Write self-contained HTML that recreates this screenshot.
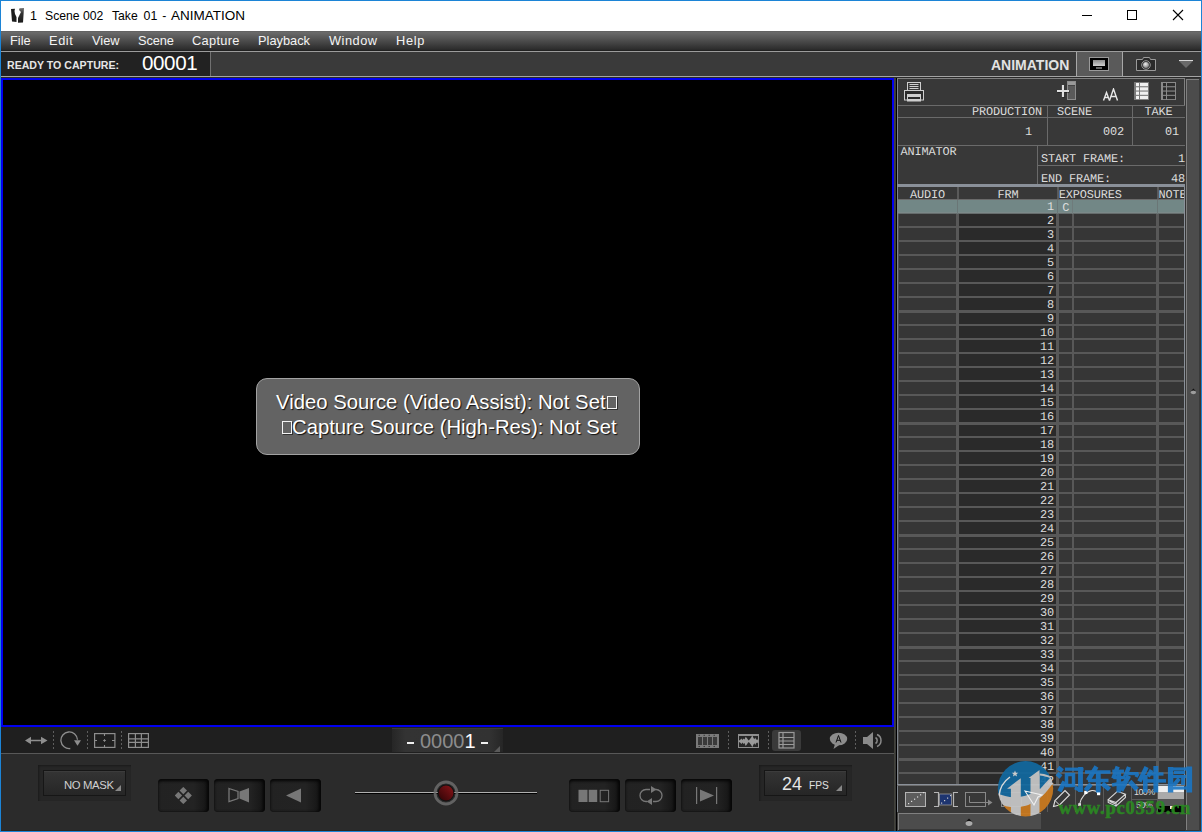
<!DOCTYPE html>
<html><head><meta charset="utf-8">
<style>
*{margin:0;padding:0;box-sizing:border-box}
html,body{width:1202px;height:832px;overflow:hidden;background:#2b2b2b}
body{position:relative;font-family:"Liberation Sans",sans-serif}
.a{position:absolute}
.m{font-family:"Liberation Mono",monospace;text-rendering:geometricPrecision}
.t{white-space:pre;line-height:1}
.msg{text-shadow:1px 1px 1px rgba(0,0,0,.85)}
</style></head><body>
<div class="a" style="left:0px;top:0px;width:1202px;height:832px;background:#1c84d6;"></div>
<div class="a" style="left:1px;top:1px;width:1200px;height:30px;background:#fff;"></div>
<svg class="a" style="left:10px;top:7px;" width="16" height="18" viewBox="0 0 16 18"><defs><linearGradient id="ig" x1="0" y1="0" x2="0" y2="1"><stop offset="0" stop-color="#777"/><stop offset=".35" stop-color="#333"/><stop offset="1" stop-color="#1a1a1a"/></linearGradient></defs><path d="M1 2L5 1.8L4.5 4L5 7L6.5 10L6.5 15L2 14.5Z" fill="#1c1c1c"/><path d="M9.5 1.2L14 1L13 15.5L8 15.7L8 11L9.5 8L11 5L9 3Z" fill="url(#ig)"/></svg>
<div class="a t " style="left:30px;top:10px;font-size:12.5px;color:#000;">1</div>
<div class="a t " style="left:45px;top:10px;font-size:12.2px;color:#000;">Scene 002</div>
<div class="a t " style="left:112px;top:10px;font-size:12.2px;color:#000;">Take</div>
<div class="a t " style="left:143.5px;top:10px;font-size:12.4px;color:#000;">01</div>
<div class="a t " style="left:162.2px;top:10px;font-size:12.2px;color:#000;">-</div>
<div class="a t " style="left:171px;top:9px;font-size:13.5px;color:#000;">ANIMATION</div>
<div class="a" style="left:1082px;top:15px;width:10px;height:1px;background:#000;"></div>
<div class="a" style="left:1127px;top:10px;width:10px;height:10px;background:transparent;border:1px solid #000"></div>
<svg class="a" style="left:1172px;top:9px;" width="12" height="12" viewBox="0 0 12 12"><path d="M1 1L11 11M11 1L1 11" stroke="#000" stroke-width="1.1"/></svg>
<div class="a" style="left:1px;top:31px;width:1200px;height:20px;background:linear-gradient(#606060,#6a6a6a 8%,#2c2c2c 92%,#1c1c1c);"></div>
<div class="a t " style="left:10px;top:35px;font-size:12.8px;color:#f4f4f4;letter-spacing:0px">File</div>
<div class="a t " style="left:49px;top:35px;font-size:12.8px;color:#f4f4f4;letter-spacing:0.6px">Edit</div>
<div class="a t " style="left:92px;top:35px;font-size:12.8px;color:#f4f4f4;letter-spacing:0px">View</div>
<div class="a t " style="left:138px;top:35px;font-size:12.8px;color:#f4f4f4;letter-spacing:-0.1px">Scene</div>
<div class="a t " style="left:192px;top:35px;font-size:12.8px;color:#f4f4f4;letter-spacing:0.3px">Capture</div>
<div class="a t " style="left:258px;top:35px;font-size:12.8px;color:#f4f4f4;letter-spacing:0px">Playback</div>
<div class="a t " style="left:329px;top:35px;font-size:12.8px;color:#f4f4f4;letter-spacing:0.5px">Window</div>
<div class="a t " style="left:396px;top:35px;font-size:12.8px;color:#f4f4f4;letter-spacing:0.7px">Help</div>
<div class="a" style="left:1px;top:51px;width:1200px;height:1px;background:#9c9c9c;"></div>
<div class="a" style="left:1px;top:52px;width:209px;height:24px;background:#222;"></div>
<div class="a" style="left:210px;top:52px;width:1px;height:24px;background:#707070;"></div>
<div class="a" style="left:211px;top:52px;width:865px;height:24px;background:#3a3a3a;"></div>
<div class="a" style="left:1076px;top:52px;width:1px;height:24px;background:#a8a8a8;"></div>
<div class="a" style="left:1077px;top:52px;width:45px;height:24px;background:#5a5a5a;"></div>
<div class="a" style="left:1122px;top:52px;width:1px;height:24px;background:#a8a8a8;"></div>
<div class="a" style="left:1123px;top:52px;width:78px;height:24px;background:#3a3a3a;"></div>
<div class="a" style="left:1px;top:76px;width:1200px;height:1px;background:#a4a4a4;"></div>
<div class="a" style="left:1px;top:77px;width:1200px;height:1px;background:#2a2a2a;"></div>
<div class="a t " style="left:7px;top:59.5px;font-size:10.6px;color:#e6e6e6;font-weight:bold">READY TO CAPTURE:</div>
<div class="a t " style="left:142px;top:53px;font-size:20.6px;color:#fff;letter-spacing:-0.4px">00001</div>
<div class="a t " style="left:991px;top:58px;font-size:14px;color:#e2e2e2;font-weight:bold">ANIMATION</div>
<svg class="a" style="left:1089px;top:57px;" width="20" height="14" viewBox="0 0 20 14"><rect x="0.5" y="0.5" width="19" height="13" fill="#000" stroke="#9a9a9a"/><defs><linearGradient id="mg" x1="0" y1="0" x2="0" y2="1"><stop offset="0" stop-color="#8a8a8a"/><stop offset="1" stop-color="#d0d0d0"/></linearGradient></defs><rect x="4" y="3" width="12" height="6" fill="url(#mg)"/><rect x="7" y="10.5" width="6" height="1" fill="#ccc"/></svg>
<svg class="a" style="left:1135px;top:56px;" width="22" height="16" viewBox="0 0 22 16"><path d="M1.5 3.5H7.5L8.5 1.5H14.5L15.5 3.5H20.5V14.5H1.5Z" fill="#2a2a2a" stroke="#9a9a9a"/><circle cx="11" cy="9" r="4.3" fill="#2a2a2a" stroke="#999"/><defs><radialGradient id="lg" cx=".4" cy=".35" r=".7"><stop offset="0" stop-color="#f0f0f0"/><stop offset="1" stop-color="#777"/></radialGradient></defs><circle cx="11" cy="9" r="3" fill="url(#lg)"/></svg>
<div class="a" style="left:1179px;top:60px;width:14px;height:1px;background:#d8d8d8;"></div>
<svg class="a" style="left:1179px;top:61px;" width="14" height="8" viewBox="0 0 14 8"><path d="M0 0H14L7 7Z" fill="#6a6a6a"/></svg>
<div class="a" style="left:1px;top:78px;width:893px;height:649px;background:#000;border:2px solid #0000f0"></div>
<div class="a" style="left:256px;top:378px;width:384px;height:77px;background:#636363;border:1px solid #a2a2a2;border-radius:11px"></div>
<div class="a t msg" style="left:276px;top:392px;font-size:20.3px;color:#fff;">Video Source (Video Assist): Not Set</div>
<div class="a" style="left:607px;top:396px;width:10px;height:13px;background:transparent;border:1px solid #f4f4f4;box-shadow:1px 1px 0 rgba(0,0,0,.5)"></div>
<div class="a" style="left:282px;top:421px;width:10px;height:13px;background:transparent;border:1px solid #f4f4f4;box-shadow:1px 1px 0 rgba(0,0,0,.5)"></div>
<div class="a t msg" style="left:292px;top:417.2px;font-size:20.3px;color:#fff;">Capture Source (High-Res): Not Set</div>
<div class="a" style="left:1px;top:727px;width:893px;height:26px;background:#1f1f1f;"></div>
<div class="a" style="left:1px;top:753px;width:893px;height:1px;background:#585858;"></div>
<div class="a" style="left:1px;top:754px;width:893px;height:76px;background:#2b2b2b;"></div>
<div class="a" style="left:1px;top:830px;width:893px;height:1px;background:#2a2622;"></div>
<div class="a" style="left:894px;top:78px;width:1px;height:753px;background:#42423a;"></div>
<div class="a" style="left:895px;top:78px;width:1px;height:753px;background:#3a3a3a;"></div>
<div class="a" style="left:896px;top:78px;width:1px;height:753px;background:#000;"></div>
<div class="a" style="left:897px;top:78px;width:1px;height:734px;background:#7e848c;"></div>
<div class="a" style="left:898px;top:78px;width:303px;height:753px;background:#383838;"></div>
<div class="a" style="left:1185px;top:78px;width:16px;height:753px;background:#353535;"></div>
<div class="a" style="left:1186px;top:79px;width:13px;height:751px;background:#808080;"></div>
<div class="a" style="left:1187px;top:80px;width:12px;height:750px;background:#4c4c4c;"></div>
<div class="a" style="left:1199px;top:79px;width:1px;height:752px;background:#3a3a3a;"></div>
<div class="a" style="left:1200px;top:77px;width:1px;height:754px;background:#3a3530;"></div>
<svg class="a" style="left:1189px;top:386px;" width="9" height="10" viewBox="0 0 9 10"><path d="M4.4 2.5L6.8 5.3H2Z" fill="#111"/><ellipse cx="4.4" cy="6.3" rx="2.6" ry="1.9" fill="#9c9c9c"/></svg>
<div class="a" style="left:897px;top:78px;width:288px;height:1px;background:#808080;"></div>
<div class="a" style="left:1184px;top:78px;width:1px;height:28px;background:#808080;"></div>
<div class="a" style="left:898px;top:105px;width:287px;height:1px;background:#6a6a6a;"></div>
<svg class="a" style="left:903px;top:81px;" width="23" height="21" viewBox="0 0 23 21"><rect x="4.5" y="1.5" width="13" height="8" fill="#383838" stroke="#cfcfcf"/><path d="M6.5 3.5H15.5M6.5 5.5H15.5M6.5 7.5H15.5" stroke="#cfcfcf"/><rect x="1.5" y="9.5" width="19" height="9.5" fill="#2c2c2c" stroke="#cfcfcf"/><rect x="4" y="13" width="14" height="7.5" fill="#cfcfcf"/><rect x="5" y="16" width="12" height="2" fill="#2a2a2a"/></svg>
<svg class="a" style="left:1056px;top:80px;" width="22" height="22" viewBox="0 0 22 22"><rect x="11.5" y="1.5" width="8" height="18" fill="#5a5a5a" stroke="#8c8c8c"/><rect x="12" y="2" width="7" height="3" fill="#999"/><rect x="12" y="5" width="7" height="1" fill="#444"/><path d="M1 11H13M7 5V17" stroke="#111" stroke-width="2.4" opacity=".6" transform="translate(0.6,0.6)"/><path d="M1 11H13M7 5V17" stroke="#e0e0e0" stroke-width="2.2"/></svg>
<svg class="a" style="left:1102px;top:88px;" width="17" height="13" viewBox="0 0 17 13"><path d="M1.5 12.5L4.5 4.5L7.5 12.5M2.8 9.5H6.2" stroke="#e8e8e8" stroke-width="1.4" fill="none"/><path d="M7.5 12.5L11.5 1L15.5 12.5M9 8.5H14" stroke="#e8e8e8" stroke-width="1.4" fill="none"/></svg>
<svg class="a" style="left:1134px;top:82px;" width="15" height="18" viewBox="0 0 15 18"><rect x="0" y="0" width="15" height="18" fill="#7a7a7a"/><rect x="2" y="1" width="3" height="3.2" fill="#f4f4f4"/><rect x="6" y="1" width="8" height="3.2" fill="#f0f0f0"/><rect x="2" y="5.3" width="3" height="3.2" fill="#f4f4f4"/><rect x="6" y="5.3" width="8" height="3.2" fill="#f0f0f0"/><rect x="2" y="9.6" width="3" height="3.2" fill="#f4f4f4"/><rect x="6" y="9.6" width="8" height="3.2" fill="#f0f0f0"/><rect x="2" y="13.9" width="3" height="3.2" fill="#f4f4f4"/><rect x="6" y="13.9" width="8" height="3.2" fill="#f0f0f0"/></svg>
<svg class="a" style="left:1161px;top:82px;" width="15" height="18" viewBox="0 0 15 18"><rect x="0" y="0" width="15" height="18" fill="#8a8a8a"/><rect x="2" y="1" width="3" height="3.2" fill="#2a2a2a"/><rect x="6" y="1" width="8" height="3.2" fill="#2e2e2e"/><rect x="2" y="5.3" width="3" height="3.2" fill="#2a2a2a"/><rect x="6" y="5.3" width="8" height="3.2" fill="#2e2e2e"/><rect x="2" y="9.6" width="3" height="3.2" fill="#2a2a2a"/><rect x="6" y="9.6" width="8" height="3.2" fill="#2e2e2e"/><rect x="2" y="13.9" width="3" height="3.2" fill="#2a2a2a"/><rect x="6" y="13.9" width="8" height="3.2" fill="#2e2e2e"/></svg>
<div class="a" style="left:1047px;top:106px;width:1px;height:39px;background:#6a6a6a;"></div>
<div class="a" style="left:1132px;top:106px;width:1px;height:39px;background:#6a6a6a;"></div>
<div class="a" style="left:898px;top:117px;width:287px;height:1px;background:#6a6a6a;"></div>
<div class="a" style="left:898px;top:145px;width:287px;height:1px;background:#6a6a6a;"></div>
<div class="a t m" style="left:972px;top:107px;font-size:11.9px;color:#dcdcdc;letter-spacing:-0.14px;">PRODUCTION</div>
<div class="a t m" style="left:1057px;top:107px;font-size:11.9px;color:#dcdcdc;letter-spacing:-0.14px;">SCENE</div>
<div class="a t m" style="left:1144.5px;top:107px;font-size:11.9px;color:#dcdcdc;letter-spacing:-0.14px;">TAKE</div>
<div class="a t m" style="left:1025px;top:127px;font-size:11.9px;color:#dcdcdc;letter-spacing:-0.14px;">1</div>
<div class="a t m" style="left:1103px;top:127px;font-size:11.9px;color:#dcdcdc;letter-spacing:-0.14px;">002</div>
<div class="a t m" style="left:1165px;top:127px;font-size:11.9px;color:#dcdcdc;letter-spacing:-0.14px;">01</div>
<div class="a" style="left:1037px;top:146px;width:1px;height:38px;background:#6a6a6a;"></div>
<div class="a" style="left:1038px;top:165px;width:147px;height:1px;background:#6a6a6a;"></div>
<div class="a t m" style="left:900.5px;top:147px;font-size:11.9px;color:#dcdcdc;letter-spacing:-0.14px;">ANIMATOR</div>
<div class="a t m" style="left:1041px;top:154px;font-size:11.9px;color:#dcdcdc;letter-spacing:-0.14px;">START FRAME:</div>
<div class="a t m" style="left:1178px;top:154px;font-size:11.9px;color:#dcdcdc;letter-spacing:-0.14px;">1</div>
<div class="a t m" style="left:1041px;top:174px;font-size:11.9px;color:#dcdcdc;letter-spacing:-0.14px;">END FRAME:</div>
<div class="a t m" style="left:1171px;top:174px;font-size:11.9px;color:#dcdcdc;letter-spacing:-0.14px;">48</div>
<div class="a" style="left:897px;top:184px;width:288px;height:3px;background:#8a9099;"></div>
<div class="a" style="left:1184px;top:184px;width:1px;height:602px;background:#8a9099;"></div>
<div class="a" style="left:957px;top:187px;width:2px;height:12px;background:#5a5a5a;"></div>
<div class="a" style="left:1057px;top:187px;width:2px;height:12px;background:#5a5a5a;"></div>
<div class="a" style="left:1157px;top:187px;width:2px;height:12px;background:#5a5a5a;"></div>
<div class="a" style="left:898px;top:199px;width:286px;height:1px;background:#6a6a6a;"></div>
<div class="a t m" style="left:910px;top:190px;font-size:11.9px;color:#dcdcdc;letter-spacing:-0.14px;">AUDIO</div>
<div class="a t m" style="left:997.5px;top:190px;font-size:11.9px;color:#dcdcdc;letter-spacing:-0.14px;">FRM</div>
<div class="a t m" style="left:1058.8px;top:190px;font-size:11.9px;color:#dcdcdc;letter-spacing:-0.14px;">EXPOSURES</div>
<div class="a" style="left:1158px;top:187px;width:26px;height:12px;overflow:hidden"><div class="a t m" style="left:0.5px;top:3px;font-size:11.9px;letter-spacing:-0.14px;color:#dcdcdc">NOTES</div></div>
<div class="a" style="left:898px;top:200px;width:286px;height:584px;background:#585858;"></div>
<div class="a" style="left:898px;top:200px;width:1px;height:584px;background:#4e4e4e;"></div>
<div class="a" style="left:898px;top:200px;width:286px;height:12px;background:#728786;"></div>
<div class="a" style="left:898px;top:212px;width:286px;height:1px;background:#7b8989;"></div>
<div class="a" style="left:898px;top:213px;width:286px;height:1px;background:#656c6c;"></div>
<div class="a" style="left:957px;top:200px;width:1px;height:14px;background:#6a7676;"></div>
<div class="a" style="left:1057px;top:200px;width:1px;height:14px;background:#6a7676;"></div>
<div class="a" style="left:1072px;top:200px;width:1px;height:14px;background:#6f7b7b;"></div>
<div class="a" style="left:1157px;top:200px;width:1px;height:14px;background:#6a7676;"></div>
<div class="a t m" style="left:1047px;top:202px;font-size:11.9px;color:#dcdcdc;letter-spacing:-0.14px;">1</div>
<div class="a" style="left:899px;top:214px;width:57px;height:12px;background:#363636;"></div>
<div class="a" style="left:959px;top:214px;width:97px;height:12px;background:#2a2a2a;"></div>
<div class="a" style="left:1059px;top:214px;width:13px;height:12px;background:#363636;"></div>
<div class="a" style="left:1074px;top:214px;width:82px;height:12px;background:#363636;"></div>
<div class="a" style="left:1159px;top:214px;width:25px;height:12px;background:#363636;"></div>
<div class="a t m" style="left:1047px;top:216px;font-size:11.9px;color:#dcdcdc;letter-spacing:-0.14px;">2</div>
<div class="a" style="left:899px;top:228px;width:57px;height:12px;background:#363636;"></div>
<div class="a" style="left:959px;top:228px;width:97px;height:12px;background:#2a2a2a;"></div>
<div class="a" style="left:1059px;top:228px;width:13px;height:12px;background:#363636;"></div>
<div class="a" style="left:1074px;top:228px;width:82px;height:12px;background:#363636;"></div>
<div class="a" style="left:1159px;top:228px;width:25px;height:12px;background:#363636;"></div>
<div class="a t m" style="left:1047px;top:230px;font-size:11.9px;color:#dcdcdc;letter-spacing:-0.14px;">3</div>
<div class="a" style="left:899px;top:242px;width:57px;height:12px;background:#363636;"></div>
<div class="a" style="left:959px;top:242px;width:97px;height:12px;background:#2a2a2a;"></div>
<div class="a" style="left:1059px;top:242px;width:13px;height:12px;background:#363636;"></div>
<div class="a" style="left:1074px;top:242px;width:82px;height:12px;background:#363636;"></div>
<div class="a" style="left:1159px;top:242px;width:25px;height:12px;background:#363636;"></div>
<div class="a t m" style="left:1047px;top:244px;font-size:11.9px;color:#dcdcdc;letter-spacing:-0.14px;">4</div>
<div class="a" style="left:899px;top:256px;width:57px;height:12px;background:#363636;"></div>
<div class="a" style="left:959px;top:256px;width:97px;height:12px;background:#2a2a2a;"></div>
<div class="a" style="left:1059px;top:256px;width:13px;height:12px;background:#363636;"></div>
<div class="a" style="left:1074px;top:256px;width:82px;height:12px;background:#363636;"></div>
<div class="a" style="left:1159px;top:256px;width:25px;height:12px;background:#363636;"></div>
<div class="a t m" style="left:1047px;top:258px;font-size:11.9px;color:#dcdcdc;letter-spacing:-0.14px;">5</div>
<div class="a" style="left:899px;top:270px;width:57px;height:12px;background:#363636;"></div>
<div class="a" style="left:959px;top:270px;width:97px;height:12px;background:#2a2a2a;"></div>
<div class="a" style="left:1059px;top:270px;width:13px;height:12px;background:#363636;"></div>
<div class="a" style="left:1074px;top:270px;width:82px;height:12px;background:#363636;"></div>
<div class="a" style="left:1159px;top:270px;width:25px;height:12px;background:#363636;"></div>
<div class="a t m" style="left:1047px;top:272px;font-size:11.9px;color:#dcdcdc;letter-spacing:-0.14px;">6</div>
<div class="a" style="left:899px;top:284px;width:57px;height:12px;background:#363636;"></div>
<div class="a" style="left:959px;top:284px;width:97px;height:12px;background:#2a2a2a;"></div>
<div class="a" style="left:1059px;top:284px;width:13px;height:12px;background:#363636;"></div>
<div class="a" style="left:1074px;top:284px;width:82px;height:12px;background:#363636;"></div>
<div class="a" style="left:1159px;top:284px;width:25px;height:12px;background:#363636;"></div>
<div class="a t m" style="left:1047px;top:286px;font-size:11.9px;color:#dcdcdc;letter-spacing:-0.14px;">7</div>
<div class="a" style="left:899px;top:298px;width:57px;height:12px;background:#363636;"></div>
<div class="a" style="left:959px;top:298px;width:97px;height:12px;background:#2a2a2a;"></div>
<div class="a" style="left:1059px;top:298px;width:13px;height:12px;background:#363636;"></div>
<div class="a" style="left:1074px;top:298px;width:82px;height:12px;background:#363636;"></div>
<div class="a" style="left:1159px;top:298px;width:25px;height:12px;background:#363636;"></div>
<div class="a t m" style="left:1047px;top:300px;font-size:11.9px;color:#dcdcdc;letter-spacing:-0.14px;">8</div>
<div class="a" style="left:899px;top:313px;width:57px;height:11px;background:#363636;"></div>
<div class="a" style="left:959px;top:313px;width:97px;height:11px;background:#2a2a2a;"></div>
<div class="a" style="left:1059px;top:313px;width:13px;height:11px;background:#363636;"></div>
<div class="a" style="left:1074px;top:313px;width:82px;height:11px;background:#363636;"></div>
<div class="a" style="left:1159px;top:313px;width:25px;height:11px;background:#363636;"></div>
<div class="a t m" style="left:1047px;top:314px;font-size:11.9px;color:#dcdcdc;letter-spacing:-0.14px;">9</div>
<div class="a" style="left:899px;top:326px;width:57px;height:12px;background:#363636;"></div>
<div class="a" style="left:959px;top:326px;width:97px;height:12px;background:#2a2a2a;"></div>
<div class="a" style="left:1059px;top:326px;width:13px;height:12px;background:#363636;"></div>
<div class="a" style="left:1074px;top:326px;width:82px;height:12px;background:#363636;"></div>
<div class="a" style="left:1159px;top:326px;width:25px;height:12px;background:#363636;"></div>
<div class="a t m" style="left:1040px;top:328px;font-size:11.9px;color:#dcdcdc;letter-spacing:-0.14px;">10</div>
<div class="a" style="left:899px;top:340px;width:57px;height:12px;background:#363636;"></div>
<div class="a" style="left:959px;top:340px;width:97px;height:12px;background:#2a2a2a;"></div>
<div class="a" style="left:1059px;top:340px;width:13px;height:12px;background:#363636;"></div>
<div class="a" style="left:1074px;top:340px;width:82px;height:12px;background:#363636;"></div>
<div class="a" style="left:1159px;top:340px;width:25px;height:12px;background:#363636;"></div>
<div class="a t m" style="left:1040px;top:342px;font-size:11.9px;color:#dcdcdc;letter-spacing:-0.14px;">11</div>
<div class="a" style="left:899px;top:354px;width:57px;height:12px;background:#363636;"></div>
<div class="a" style="left:959px;top:354px;width:97px;height:12px;background:#2a2a2a;"></div>
<div class="a" style="left:1059px;top:354px;width:13px;height:12px;background:#363636;"></div>
<div class="a" style="left:1074px;top:354px;width:82px;height:12px;background:#363636;"></div>
<div class="a" style="left:1159px;top:354px;width:25px;height:12px;background:#363636;"></div>
<div class="a t m" style="left:1040px;top:356px;font-size:11.9px;color:#dcdcdc;letter-spacing:-0.14px;">12</div>
<div class="a" style="left:899px;top:368px;width:57px;height:12px;background:#363636;"></div>
<div class="a" style="left:959px;top:368px;width:97px;height:12px;background:#2a2a2a;"></div>
<div class="a" style="left:1059px;top:368px;width:13px;height:12px;background:#363636;"></div>
<div class="a" style="left:1074px;top:368px;width:82px;height:12px;background:#363636;"></div>
<div class="a" style="left:1159px;top:368px;width:25px;height:12px;background:#363636;"></div>
<div class="a t m" style="left:1040px;top:370px;font-size:11.9px;color:#dcdcdc;letter-spacing:-0.14px;">13</div>
<div class="a" style="left:899px;top:382px;width:57px;height:12px;background:#363636;"></div>
<div class="a" style="left:959px;top:382px;width:97px;height:12px;background:#2a2a2a;"></div>
<div class="a" style="left:1059px;top:382px;width:13px;height:12px;background:#363636;"></div>
<div class="a" style="left:1074px;top:382px;width:82px;height:12px;background:#363636;"></div>
<div class="a" style="left:1159px;top:382px;width:25px;height:12px;background:#363636;"></div>
<div class="a t m" style="left:1040px;top:384px;font-size:11.9px;color:#dcdcdc;letter-spacing:-0.14px;">14</div>
<div class="a" style="left:899px;top:396px;width:57px;height:12px;background:#363636;"></div>
<div class="a" style="left:959px;top:396px;width:97px;height:12px;background:#2a2a2a;"></div>
<div class="a" style="left:1059px;top:396px;width:13px;height:12px;background:#363636;"></div>
<div class="a" style="left:1074px;top:396px;width:82px;height:12px;background:#363636;"></div>
<div class="a" style="left:1159px;top:396px;width:25px;height:12px;background:#363636;"></div>
<div class="a t m" style="left:1040px;top:398px;font-size:11.9px;color:#dcdcdc;letter-spacing:-0.14px;">15</div>
<div class="a" style="left:899px;top:410px;width:57px;height:12px;background:#363636;"></div>
<div class="a" style="left:959px;top:410px;width:97px;height:12px;background:#2a2a2a;"></div>
<div class="a" style="left:1059px;top:410px;width:13px;height:12px;background:#363636;"></div>
<div class="a" style="left:1074px;top:410px;width:82px;height:12px;background:#363636;"></div>
<div class="a" style="left:1159px;top:410px;width:25px;height:12px;background:#363636;"></div>
<div class="a t m" style="left:1040px;top:412px;font-size:11.9px;color:#dcdcdc;letter-spacing:-0.14px;">16</div>
<div class="a" style="left:899px;top:425px;width:57px;height:11px;background:#363636;"></div>
<div class="a" style="left:959px;top:425px;width:97px;height:11px;background:#2a2a2a;"></div>
<div class="a" style="left:1059px;top:425px;width:13px;height:11px;background:#363636;"></div>
<div class="a" style="left:1074px;top:425px;width:82px;height:11px;background:#363636;"></div>
<div class="a" style="left:1159px;top:425px;width:25px;height:11px;background:#363636;"></div>
<div class="a t m" style="left:1040px;top:426px;font-size:11.9px;color:#dcdcdc;letter-spacing:-0.14px;">17</div>
<div class="a" style="left:899px;top:438px;width:57px;height:12px;background:#363636;"></div>
<div class="a" style="left:959px;top:438px;width:97px;height:12px;background:#2a2a2a;"></div>
<div class="a" style="left:1059px;top:438px;width:13px;height:12px;background:#363636;"></div>
<div class="a" style="left:1074px;top:438px;width:82px;height:12px;background:#363636;"></div>
<div class="a" style="left:1159px;top:438px;width:25px;height:12px;background:#363636;"></div>
<div class="a t m" style="left:1040px;top:440px;font-size:11.9px;color:#dcdcdc;letter-spacing:-0.14px;">18</div>
<div class="a" style="left:899px;top:452px;width:57px;height:12px;background:#363636;"></div>
<div class="a" style="left:959px;top:452px;width:97px;height:12px;background:#2a2a2a;"></div>
<div class="a" style="left:1059px;top:452px;width:13px;height:12px;background:#363636;"></div>
<div class="a" style="left:1074px;top:452px;width:82px;height:12px;background:#363636;"></div>
<div class="a" style="left:1159px;top:452px;width:25px;height:12px;background:#363636;"></div>
<div class="a t m" style="left:1040px;top:454px;font-size:11.9px;color:#dcdcdc;letter-spacing:-0.14px;">19</div>
<div class="a" style="left:899px;top:466px;width:57px;height:12px;background:#363636;"></div>
<div class="a" style="left:959px;top:466px;width:97px;height:12px;background:#2a2a2a;"></div>
<div class="a" style="left:1059px;top:466px;width:13px;height:12px;background:#363636;"></div>
<div class="a" style="left:1074px;top:466px;width:82px;height:12px;background:#363636;"></div>
<div class="a" style="left:1159px;top:466px;width:25px;height:12px;background:#363636;"></div>
<div class="a t m" style="left:1040px;top:468px;font-size:11.9px;color:#dcdcdc;letter-spacing:-0.14px;">20</div>
<div class="a" style="left:899px;top:480px;width:57px;height:12px;background:#363636;"></div>
<div class="a" style="left:959px;top:480px;width:97px;height:12px;background:#2a2a2a;"></div>
<div class="a" style="left:1059px;top:480px;width:13px;height:12px;background:#363636;"></div>
<div class="a" style="left:1074px;top:480px;width:82px;height:12px;background:#363636;"></div>
<div class="a" style="left:1159px;top:480px;width:25px;height:12px;background:#363636;"></div>
<div class="a t m" style="left:1040px;top:482px;font-size:11.9px;color:#dcdcdc;letter-spacing:-0.14px;">21</div>
<div class="a" style="left:899px;top:494px;width:57px;height:12px;background:#363636;"></div>
<div class="a" style="left:959px;top:494px;width:97px;height:12px;background:#2a2a2a;"></div>
<div class="a" style="left:1059px;top:494px;width:13px;height:12px;background:#363636;"></div>
<div class="a" style="left:1074px;top:494px;width:82px;height:12px;background:#363636;"></div>
<div class="a" style="left:1159px;top:494px;width:25px;height:12px;background:#363636;"></div>
<div class="a t m" style="left:1040px;top:496px;font-size:11.9px;color:#dcdcdc;letter-spacing:-0.14px;">22</div>
<div class="a" style="left:899px;top:508px;width:57px;height:12px;background:#363636;"></div>
<div class="a" style="left:959px;top:508px;width:97px;height:12px;background:#2a2a2a;"></div>
<div class="a" style="left:1059px;top:508px;width:13px;height:12px;background:#363636;"></div>
<div class="a" style="left:1074px;top:508px;width:82px;height:12px;background:#363636;"></div>
<div class="a" style="left:1159px;top:508px;width:25px;height:12px;background:#363636;"></div>
<div class="a t m" style="left:1040px;top:510px;font-size:11.9px;color:#dcdcdc;letter-spacing:-0.14px;">23</div>
<div class="a" style="left:899px;top:522px;width:57px;height:12px;background:#363636;"></div>
<div class="a" style="left:959px;top:522px;width:97px;height:12px;background:#2a2a2a;"></div>
<div class="a" style="left:1059px;top:522px;width:13px;height:12px;background:#363636;"></div>
<div class="a" style="left:1074px;top:522px;width:82px;height:12px;background:#363636;"></div>
<div class="a" style="left:1159px;top:522px;width:25px;height:12px;background:#363636;"></div>
<div class="a t m" style="left:1040px;top:524px;font-size:11.9px;color:#dcdcdc;letter-spacing:-0.14px;">24</div>
<div class="a" style="left:899px;top:537px;width:57px;height:11px;background:#363636;"></div>
<div class="a" style="left:959px;top:537px;width:97px;height:11px;background:#2a2a2a;"></div>
<div class="a" style="left:1059px;top:537px;width:13px;height:11px;background:#363636;"></div>
<div class="a" style="left:1074px;top:537px;width:82px;height:11px;background:#363636;"></div>
<div class="a" style="left:1159px;top:537px;width:25px;height:11px;background:#363636;"></div>
<div class="a t m" style="left:1040px;top:538px;font-size:11.9px;color:#dcdcdc;letter-spacing:-0.14px;">25</div>
<div class="a" style="left:899px;top:550px;width:57px;height:12px;background:#363636;"></div>
<div class="a" style="left:959px;top:550px;width:97px;height:12px;background:#2a2a2a;"></div>
<div class="a" style="left:1059px;top:550px;width:13px;height:12px;background:#363636;"></div>
<div class="a" style="left:1074px;top:550px;width:82px;height:12px;background:#363636;"></div>
<div class="a" style="left:1159px;top:550px;width:25px;height:12px;background:#363636;"></div>
<div class="a t m" style="left:1040px;top:552px;font-size:11.9px;color:#dcdcdc;letter-spacing:-0.14px;">26</div>
<div class="a" style="left:899px;top:564px;width:57px;height:12px;background:#363636;"></div>
<div class="a" style="left:959px;top:564px;width:97px;height:12px;background:#2a2a2a;"></div>
<div class="a" style="left:1059px;top:564px;width:13px;height:12px;background:#363636;"></div>
<div class="a" style="left:1074px;top:564px;width:82px;height:12px;background:#363636;"></div>
<div class="a" style="left:1159px;top:564px;width:25px;height:12px;background:#363636;"></div>
<div class="a t m" style="left:1040px;top:566px;font-size:11.9px;color:#dcdcdc;letter-spacing:-0.14px;">27</div>
<div class="a" style="left:899px;top:578px;width:57px;height:12px;background:#363636;"></div>
<div class="a" style="left:959px;top:578px;width:97px;height:12px;background:#2a2a2a;"></div>
<div class="a" style="left:1059px;top:578px;width:13px;height:12px;background:#363636;"></div>
<div class="a" style="left:1074px;top:578px;width:82px;height:12px;background:#363636;"></div>
<div class="a" style="left:1159px;top:578px;width:25px;height:12px;background:#363636;"></div>
<div class="a t m" style="left:1040px;top:580px;font-size:11.9px;color:#dcdcdc;letter-spacing:-0.14px;">28</div>
<div class="a" style="left:899px;top:592px;width:57px;height:12px;background:#363636;"></div>
<div class="a" style="left:959px;top:592px;width:97px;height:12px;background:#2a2a2a;"></div>
<div class="a" style="left:1059px;top:592px;width:13px;height:12px;background:#363636;"></div>
<div class="a" style="left:1074px;top:592px;width:82px;height:12px;background:#363636;"></div>
<div class="a" style="left:1159px;top:592px;width:25px;height:12px;background:#363636;"></div>
<div class="a t m" style="left:1040px;top:594px;font-size:11.9px;color:#dcdcdc;letter-spacing:-0.14px;">29</div>
<div class="a" style="left:899px;top:606px;width:57px;height:12px;background:#363636;"></div>
<div class="a" style="left:959px;top:606px;width:97px;height:12px;background:#2a2a2a;"></div>
<div class="a" style="left:1059px;top:606px;width:13px;height:12px;background:#363636;"></div>
<div class="a" style="left:1074px;top:606px;width:82px;height:12px;background:#363636;"></div>
<div class="a" style="left:1159px;top:606px;width:25px;height:12px;background:#363636;"></div>
<div class="a t m" style="left:1040px;top:608px;font-size:11.9px;color:#dcdcdc;letter-spacing:-0.14px;">30</div>
<div class="a" style="left:899px;top:620px;width:57px;height:12px;background:#363636;"></div>
<div class="a" style="left:959px;top:620px;width:97px;height:12px;background:#2a2a2a;"></div>
<div class="a" style="left:1059px;top:620px;width:13px;height:12px;background:#363636;"></div>
<div class="a" style="left:1074px;top:620px;width:82px;height:12px;background:#363636;"></div>
<div class="a" style="left:1159px;top:620px;width:25px;height:12px;background:#363636;"></div>
<div class="a t m" style="left:1040px;top:622px;font-size:11.9px;color:#dcdcdc;letter-spacing:-0.14px;">31</div>
<div class="a" style="left:899px;top:634px;width:57px;height:12px;background:#363636;"></div>
<div class="a" style="left:959px;top:634px;width:97px;height:12px;background:#2a2a2a;"></div>
<div class="a" style="left:1059px;top:634px;width:13px;height:12px;background:#363636;"></div>
<div class="a" style="left:1074px;top:634px;width:82px;height:12px;background:#363636;"></div>
<div class="a" style="left:1159px;top:634px;width:25px;height:12px;background:#363636;"></div>
<div class="a t m" style="left:1040px;top:636px;font-size:11.9px;color:#dcdcdc;letter-spacing:-0.14px;">32</div>
<div class="a" style="left:899px;top:649px;width:57px;height:11px;background:#363636;"></div>
<div class="a" style="left:959px;top:649px;width:97px;height:11px;background:#2a2a2a;"></div>
<div class="a" style="left:1059px;top:649px;width:13px;height:11px;background:#363636;"></div>
<div class="a" style="left:1074px;top:649px;width:82px;height:11px;background:#363636;"></div>
<div class="a" style="left:1159px;top:649px;width:25px;height:11px;background:#363636;"></div>
<div class="a t m" style="left:1040px;top:650px;font-size:11.9px;color:#dcdcdc;letter-spacing:-0.14px;">33</div>
<div class="a" style="left:899px;top:662px;width:57px;height:12px;background:#363636;"></div>
<div class="a" style="left:959px;top:662px;width:97px;height:12px;background:#2a2a2a;"></div>
<div class="a" style="left:1059px;top:662px;width:13px;height:12px;background:#363636;"></div>
<div class="a" style="left:1074px;top:662px;width:82px;height:12px;background:#363636;"></div>
<div class="a" style="left:1159px;top:662px;width:25px;height:12px;background:#363636;"></div>
<div class="a t m" style="left:1040px;top:664px;font-size:11.9px;color:#dcdcdc;letter-spacing:-0.14px;">34</div>
<div class="a" style="left:899px;top:676px;width:57px;height:12px;background:#363636;"></div>
<div class="a" style="left:959px;top:676px;width:97px;height:12px;background:#2a2a2a;"></div>
<div class="a" style="left:1059px;top:676px;width:13px;height:12px;background:#363636;"></div>
<div class="a" style="left:1074px;top:676px;width:82px;height:12px;background:#363636;"></div>
<div class="a" style="left:1159px;top:676px;width:25px;height:12px;background:#363636;"></div>
<div class="a t m" style="left:1040px;top:678px;font-size:11.9px;color:#dcdcdc;letter-spacing:-0.14px;">35</div>
<div class="a" style="left:899px;top:690px;width:57px;height:12px;background:#363636;"></div>
<div class="a" style="left:959px;top:690px;width:97px;height:12px;background:#2a2a2a;"></div>
<div class="a" style="left:1059px;top:690px;width:13px;height:12px;background:#363636;"></div>
<div class="a" style="left:1074px;top:690px;width:82px;height:12px;background:#363636;"></div>
<div class="a" style="left:1159px;top:690px;width:25px;height:12px;background:#363636;"></div>
<div class="a t m" style="left:1040px;top:692px;font-size:11.9px;color:#dcdcdc;letter-spacing:-0.14px;">36</div>
<div class="a" style="left:899px;top:704px;width:57px;height:12px;background:#363636;"></div>
<div class="a" style="left:959px;top:704px;width:97px;height:12px;background:#2a2a2a;"></div>
<div class="a" style="left:1059px;top:704px;width:13px;height:12px;background:#363636;"></div>
<div class="a" style="left:1074px;top:704px;width:82px;height:12px;background:#363636;"></div>
<div class="a" style="left:1159px;top:704px;width:25px;height:12px;background:#363636;"></div>
<div class="a t m" style="left:1040px;top:706px;font-size:11.9px;color:#dcdcdc;letter-spacing:-0.14px;">37</div>
<div class="a" style="left:899px;top:718px;width:57px;height:12px;background:#363636;"></div>
<div class="a" style="left:959px;top:718px;width:97px;height:12px;background:#2a2a2a;"></div>
<div class="a" style="left:1059px;top:718px;width:13px;height:12px;background:#363636;"></div>
<div class="a" style="left:1074px;top:718px;width:82px;height:12px;background:#363636;"></div>
<div class="a" style="left:1159px;top:718px;width:25px;height:12px;background:#363636;"></div>
<div class="a t m" style="left:1040px;top:720px;font-size:11.9px;color:#dcdcdc;letter-spacing:-0.14px;">38</div>
<div class="a" style="left:899px;top:732px;width:57px;height:12px;background:#363636;"></div>
<div class="a" style="left:959px;top:732px;width:97px;height:12px;background:#2a2a2a;"></div>
<div class="a" style="left:1059px;top:732px;width:13px;height:12px;background:#363636;"></div>
<div class="a" style="left:1074px;top:732px;width:82px;height:12px;background:#363636;"></div>
<div class="a" style="left:1159px;top:732px;width:25px;height:12px;background:#363636;"></div>
<div class="a t m" style="left:1040px;top:734px;font-size:11.9px;color:#dcdcdc;letter-spacing:-0.14px;">39</div>
<div class="a" style="left:899px;top:746px;width:57px;height:12px;background:#363636;"></div>
<div class="a" style="left:959px;top:746px;width:97px;height:12px;background:#2a2a2a;"></div>
<div class="a" style="left:1059px;top:746px;width:13px;height:12px;background:#363636;"></div>
<div class="a" style="left:1074px;top:746px;width:82px;height:12px;background:#363636;"></div>
<div class="a" style="left:1159px;top:746px;width:25px;height:12px;background:#363636;"></div>
<div class="a t m" style="left:1040px;top:748px;font-size:11.9px;color:#dcdcdc;letter-spacing:-0.14px;">40</div>
<div class="a" style="left:899px;top:761px;width:57px;height:11px;background:#363636;"></div>
<div class="a" style="left:959px;top:761px;width:97px;height:11px;background:#2a2a2a;"></div>
<div class="a" style="left:1059px;top:761px;width:13px;height:11px;background:#363636;"></div>
<div class="a" style="left:1074px;top:761px;width:82px;height:11px;background:#363636;"></div>
<div class="a" style="left:1159px;top:761px;width:25px;height:11px;background:#363636;"></div>
<div class="a t m" style="left:1040px;top:762px;font-size:11.9px;color:#dcdcdc;letter-spacing:-0.14px;">41</div>
<div class="a" style="left:899px;top:774px;width:57px;height:10px;background:#363636;"></div>
<div class="a" style="left:959px;top:774px;width:97px;height:10px;background:#2a2a2a;"></div>
<div class="a" style="left:1059px;top:774px;width:13px;height:10px;background:#363636;"></div>
<div class="a" style="left:1074px;top:774px;width:82px;height:10px;background:#363636;"></div>
<div class="a" style="left:1159px;top:774px;width:25px;height:10px;background:#363636;"></div>
<div class="a t m" style="left:1040px;top:776px;font-size:11.9px;color:#dcdcdc;letter-spacing:-0.14px;">42</div>
<div class="a t m" style="left:1062.3px;top:203px;font-size:11.9px;color:#dcdcdc;letter-spacing:-0.14px;">C</div>
<div class="a" style="left:897px;top:784px;width:288px;height:1px;background:#8a9099;"></div>
<div class="a" style="left:897px;top:785px;width:288px;height:1px;background:#6c6c6c;"></div>
<div class="a" style="left:898px;top:812px;width:287px;height:1px;background:#383838;"></div>
<div class="a" style="left:1047px;top:786px;width:1px;height:26px;background:#5a5a5a;"></div>
<div class="a" style="left:1075px;top:786px;width:1px;height:26px;background:#5a5a5a;"></div>
<div class="a" style="left:1103px;top:786px;width:1px;height:26px;background:#5a5a5a;"></div>
<div class="a" style="left:1131px;top:786px;width:1px;height:26px;background:#5a5a5a;"></div>
<div class="a" style="left:1157px;top:786px;width:1px;height:26px;background:#5a5a5a;"></div>
<div class="a" style="left:1132px;top:799px;width:25px;height:1px;background:#5a5a5a;"></div>
<svg class="a" style="left:904px;top:791px;" width="23" height="17" viewBox="0 0 23 17"><rect x="1.5" y="1.5" width="20" height="14" fill="#5c5c5c" stroke="#b4b4b4"/><rect x="4" y="12.0" width="1.2" height="1.2" fill="#ddd"/><rect x="7" y="9.8" width="1.2" height="1.2" fill="#ddd"/><rect x="10" y="7.6" width="1.2" height="1.2" fill="#ddd"/><rect x="13" y="5.3999999999999995" width="1.2" height="1.2" fill="#ddd"/><rect x="16" y="3.1999999999999993" width="1.2" height="1.2" fill="#ddd"/><rect x="19" y="1.0" width="1.2" height="1.2" fill="#ddd"/></svg>
<svg class="a" style="left:933px;top:791px;" width="26" height="17" viewBox="0 0 26 17"><path d="M1 1.5H5.5V15.5H1M25 1.5H20.5V15.5H25" stroke="#b4b4b4" fill="none" stroke-width="1.2"/><rect x="6.5" y="3" width="12" height="11" fill="#1e3570" stroke="#999" stroke-width=".8"/><rect x="8" y="11.5" width="1.2" height="1.2" fill="#ccc"/><rect x="11" y="9.0" width="1.2" height="1.2" fill="#ccc"/><rect x="14" y="6.5" width="1.2" height="1.2" fill="#ccc"/><rect x="17" y="4.0" width="1.2" height="1.2" fill="#ccc"/></svg>
<svg class="a" style="left:964px;top:791px;" width="30" height="17" viewBox="0 0 30 17"><rect x="1.5" y="1.5" width="20" height="14" fill="none" stroke="#888"/><path d="M5.5 5V11.5H27" stroke="#888" fill="none"/><path d="M24 8.5L28.5 11.5L24 14.5Z" fill="#888"/></svg>
<svg class="a" style="left:1000px;top:791px;" width="40" height="17" viewBox="0 0 40 17"><rect x="1.5" y="1.5" width="20" height="14" fill="none" stroke="#888"/></svg>
<svg class="a" style="left:1022px;top:788px;z-index:5" width="22" height="22" viewBox="0 0 22 22"><path d="M3 3L12 17L16 9L20 7Z" fill="none" stroke="#f0f0f0" stroke-width="1.1"/></svg>
<svg class="a" style="left:1052px;top:788px;" width="20" height="20" viewBox="0 0 20 20"><path d="M1.5 18.5L3 12.5L13 2.5L17.5 7L7.5 17Z" fill="none" stroke="#ddd" stroke-width="1.1"/><path d="M3 12.5L7.5 17" stroke="#ddd"/></svg>
<svg class="a" style="left:1077px;top:788px;" width="24" height="20" viewBox="0 0 24 20"><path d="M2.5 16.5C4 9 9 3.5 15 2.5C18 2.2 20 3.5 21.5 5.5" fill="none" stroke="#ddd" stroke-width="1.1"/><rect x="1.2" y="15.2" width="2.8" height="2.8" fill="#ddd"/><rect x="7.2" y="2.8" width="3.2" height="3.2" fill="#fff"/><rect x="20" y="4" width="3.2" height="3.2" fill="#fff"/></svg>
<svg class="a" style="left:1106px;top:788px;" width="22" height="20" viewBox="0 0 22 20"><path d="M2.2 11.7L11.4 3.3L19.4 6.2L10 14.5ZM2.2 11.7V14.5L10 18.2L19.4 9.5V6.2M10 14.5V18.2M3.5 13.3L10.5 16.5" fill="none" stroke="#d8d8d8" stroke-width="1.1"/></svg>
<div class="a t " style="left:1134px;top:788px;font-size:9px;color:#dcdcdc;letter-spacing:-0.6px">100%</div>
<div class="a t " style="left:1136px;top:801px;font-size:9px;color:#dcdcdc;letter-spacing:-0.6px">50%</div>
<div class="a" style="left:1158px;top:786px;width:26px;height:6px;background:#eeeeee;"></div>
<div class="a" style="left:1158px;top:792px;width:26px;height:7px;background:#aaaaaa;"></div>
<div class="a" style="left:1158px;top:799px;width:26px;height:7px;background:#555555;"></div>
<div class="a" style="left:1158px;top:806px;width:26px;height:6px;background:#000000;"></div>
<div class="a" style="left:1170px;top:806px;width:4px;height:3px;background:#eee;"></div>
<div class="a" style="left:897px;top:812px;width:1px;height:19px;background:#3c3c3c;"></div>
<div class="a" style="left:898px;top:813px;width:143px;height:1px;background:#808080;"></div>
<div class="a" style="left:898px;top:813px;width:1px;height:17px;background:#808080;"></div>
<div class="a" style="left:899px;top:814px;width:142px;height:15px;background:#4c4c4c;"></div>
<svg class="a" style="left:964px;top:818px;" width="10" height="9" viewBox="0 0 10 9"><path d="M5 0.5L8.5 4H1.5Z" fill="#111"/><ellipse cx="5" cy="5.5" rx="3.4" ry="2.4" fill="#aaa"/></svg>
<div class="a" style="left:898px;top:830px;width:287px;height:1px;background:#302a25;"></div>
<svg class="a" style="left:24px;top:735px;" width="25" height="11" viewBox="0 0 25 11"><path d="M1 5.5L7 1.8V4.8H17V1.8L23.5 5.5L17 9.2V6.2H7V9.2Z" fill="#8e8e8e"/></svg>
<div class="a" style="left:53px;top:731px;width:1px;height:18px;background:repeating-linear-gradient(#5e5e5e 0 2px,transparent 2px 4px)"></div>
<div class="a" style="left:87px;top:731px;width:1px;height:18px;background:repeating-linear-gradient(#5e5e5e 0 2px,transparent 2px 4px)"></div>
<div class="a" style="left:121px;top:731px;width:1px;height:18px;background:repeating-linear-gradient(#5e5e5e 0 2px,transparent 2px 4px)"></div>
<svg class="a" style="left:60px;top:731px;" width="23" height="19" viewBox="0 0 23 19"><path d="M10.3 17.5A8.3 8.3 0 1 1 17.5 8.8" fill="none" stroke="#8e8e8e" stroke-width="1.3"/><path d="M14 9.2H21L17.5 14.8Z" fill="#8e8e8e"/></svg>
<svg class="a" style="left:93px;top:732px;" width="24" height="17" viewBox="0 0 24 17"><rect x="1.6" y="1.6" width="20.3" height="13.8" fill="none" stroke="#8e8e8e" stroke-width="1.2"/><path d="M11.5 1V4M11.5 13V16M1 8.5H4M19 8.5H22M10.2 8.5H12.8M11.5 7.2V9.8" stroke="#8e8e8e" stroke-width="1.1"/></svg>
<svg class="a" style="left:127px;top:732px;" width="23" height="17" viewBox="0 0 23 17"><rect x="1.6" y="1.6" width="19.8" height="13.8" fill="none" stroke="#8e8e8e" stroke-width="1.2"/><path d="M8.4 1V16M14.4 1V16M1 6.8H22M1 10.3H22" stroke="#8e8e8e" stroke-width="1.2"/></svg>
<div class="a" style="left:392px;top:728px;width:111px;height:24px;background:linear-gradient(90deg,#262626,#333 12%,#323232 88%,#262626);box-shadow:inset 0 1px 0 #3a3a3a"></div>
<div class="a" style="left:407px;top:742px;width:7px;height:2px;background:#f0f0f0;"></div>
<div class="a" style="left:481px;top:742px;width:7px;height:2px;background:#f0f0f0;"></div>
<div class="a t" style="left:420px;top:730.5px;font-size:20px;color:#8c8c8c">0000<span style="color:#fff">1</span></div>
<svg class="a" style="left:494px;top:746px;" width="7" height="6" viewBox="0 0 7 6"><path d="M6 0V6H0Z" fill="#5a5a5a"/></svg>
<svg class="a" style="left:695px;top:733px;" width="25" height="16" viewBox="0 0 25 16"><rect x="1" y="1" width="23" height="14" fill="#7a7a7a"/><rect x="3" y="4" width="4" height="8" fill="#3a3a3a"/><rect x="8" y="4" width="4" height="8" fill="#3a3a3a"/><rect x="13" y="4" width="4" height="8" fill="#3a3a3a"/><rect x="18" y="4" width="4" height="8" fill="#3a3a3a"/><rect x="3.5" y="1.8" width="1.5" height="1" fill="#3a3a3a"/><rect x="3.5" y="13" width="1.5" height="1" fill="#3a3a3a"/><rect x="8.5" y="1.8" width="1.5" height="1" fill="#3a3a3a"/><rect x="8.5" y="13" width="1.5" height="1" fill="#3a3a3a"/><rect x="13.5" y="1.8" width="1.5" height="1" fill="#3a3a3a"/><rect x="13.5" y="13" width="1.5" height="1" fill="#3a3a3a"/><rect x="18.5" y="1.8" width="1.5" height="1" fill="#3a3a3a"/><rect x="18.5" y="13" width="1.5" height="1" fill="#3a3a3a"/></svg>
<div class="a" style="left:728px;top:731px;width:1px;height:18px;background:repeating-linear-gradient(#5e5e5e 0 2px,transparent 2px 4px)"></div>
<svg class="a" style="left:737px;top:733px;" width="23" height="16" viewBox="0 0 23 16"><rect x="1" y="1" width="21" height="14" fill="#8e8e8e"/><rect x="2" y="3" width="19" height="11" fill="#262626"/><path d="M2 8.3 L2 7.50 L3 7.10 L4.5 5.50 L5.5 7.10 L6.5 5.50 L7.5 6.50 L8.7 3.70 L10 5.30 L11 6.80 L11.8 7.60 L12.8 6.30 L14 4.80 L15.3 2.30 L16.5 5.10 L17.3 6.30 L18.3 4.50 L19.3 7.10 L20 6.10 L21 7.30 L21 9.30 L20 10.50 L19.3 9.50 L18.3 12.10 L17.3 10.30 L16.5 11.50 L15.3 14.30 L14 11.80 L12.8 10.30 L11.8 9.00 L11 9.80 L10 11.30 L8.7 12.90 L7.5 10.10 L6.5 11.10 L5.5 9.50 L4.5 11.10 L3 9.50 L2 9.10 Z" fill="#9a9a9a"/></svg>
<div class="a" style="left:768px;top:731px;width:1px;height:18px;background:repeating-linear-gradient(#5e5e5e 0 2px,transparent 2px 4px)"></div>
<div class="a" style="left:772px;top:730px;width:29px;height:21px;background:#3a3a3a;border-radius:3px"></div>
<svg class="a" style="left:778px;top:731px;" width="17" height="18" viewBox="0 0 17 18"><rect x="1" y="1.5" width="15" height="15.5" fill="none" stroke="#9a9a9a" stroke-width="1.2"/><path d="M5 1.5V17M5 6.5H16M5 10H16M5 13.5H16M1 6.5H5M1 10H5M1 13.5H5" stroke="#9a9a9a" stroke-width="1.2"/></svg>
<svg class="a" style="left:829px;top:732px;" width="20" height="18" viewBox="0 0 20 18"><ellipse cx="9.5" cy="7" rx="8.7" ry="6.3" fill="#8c8c8c"/><path d="M6 12L4.5 17L11 12.5Z" fill="#8c8c8c"/><path d="M7 10.5L9.5 3.5L12 10.5M8 8.3H11" stroke="#111" stroke-width="1" fill="none"/></svg>
<div class="a" style="left:855px;top:731px;width:1px;height:18px;background:repeating-linear-gradient(#5e5e5e 0 2px,transparent 2px 4px)"></div>
<svg class="a" style="left:862px;top:731px;" width="21" height="19" viewBox="0 0 21 19"><path d="M1 6H5L11 1V18L5 13H1Z" fill="#8a8a8a"/><path d="M13.5 6.5A3.5 3.5 0 0 1 13.5 12.5M15 3.5A6.5 6.5 0 0 1 15 15.5" stroke="#8a8a8a" stroke-width="1.5" fill="none"/></svg>
<div class="a" style="left:38px;top:765px;width:93px;height:36px;background:#262626;box-shadow:inset 1px 1px 2px #1a1a1a"></div>
<div class="a" style="left:43px;top:770px;width:83px;height:26px;background:linear-gradient(#343434,#262626);border:1px solid #161616;box-shadow:inset 0 1px 0 #3c3c3c"></div>
<div class="a t " style="left:64px;top:780px;font-size:11.3px;color:#d0d0d0;letter-spacing:-0.35px">NO MASK</div>
<svg class="a" style="left:115px;top:785px;" width="7" height="7" viewBox="0 0 7 7"><path d="M6 0V6H0Z" fill="#888"/></svg>
<div class="a" style="left:759px;top:765px;width:93px;height:36px;background:#262626;box-shadow:inset 1px 1px 2px #1a1a1a"></div>
<div class="a" style="left:764px;top:770px;width:83px;height:26px;background:linear-gradient(#343434,#262626);border:1px solid #161616;box-shadow:inset 0 1px 0 #3c3c3c"></div>
<div class="a t " style="left:782px;top:775px;font-size:18px;color:#e6e6e6;">24</div>
<div class="a t " style="left:809px;top:780.5px;font-size:10.2px;color:#e0e0e0;">FPS</div>
<svg class="a" style="left:836px;top:785px;" width="7" height="7" viewBox="0 0 7 7"><path d="M6 0V6H0Z" fill="#888"/></svg>
<div class="a" style="left:158px;top:779px;width:51px;height:33px;background:linear-gradient(90deg,#222 0%,#232323 70%,#141414 100%);border-radius:4px;box-shadow:inset 0 2px 3px #070707,inset -2px 0 3px #080808"></div>
<div class="a" style="left:214px;top:779px;width:51px;height:33px;background:linear-gradient(90deg,#222 0%,#232323 70%,#141414 100%);border-radius:4px;box-shadow:inset 0 2px 3px #070707,inset -2px 0 3px #080808"></div>
<div class="a" style="left:270px;top:779px;width:51px;height:33px;background:linear-gradient(90deg,#222 0%,#232323 70%,#141414 100%);border-radius:4px;box-shadow:inset 0 2px 3px #070707,inset -2px 0 3px #080808"></div>
<div class="a" style="left:569px;top:779px;width:51px;height:33px;background:linear-gradient(90deg,#222 0%,#232323 70%,#141414 100%);border-radius:4px;box-shadow:inset 0 2px 3px #070707,inset -2px 0 3px #080808"></div>
<div class="a" style="left:625px;top:779px;width:51px;height:33px;background:linear-gradient(90deg,#222 0%,#232323 70%,#141414 100%);border-radius:4px;box-shadow:inset 0 2px 3px #070707,inset -2px 0 3px #080808"></div>
<div class="a" style="left:681px;top:779px;width:51px;height:33px;background:linear-gradient(90deg,#222 0%,#232323 70%,#141414 100%);border-radius:4px;box-shadow:inset 0 2px 3px #070707,inset -2px 0 3px #080808"></div>
<svg class="a" style="left:175px;top:787px;" width="17" height="17" viewBox="0 0 17 17"><path d="M8.3 -0.10000000000000009L12.0 3.6L8.3 7.300000000000001L4.6000000000000005 3.6Z" fill="#777"/><path d="M3.4 4.8L7.1 8.5L3.4 12.2L-0.30000000000000027 8.5Z" fill="#777"/><path d="M13.2 4.8L16.9 8.5L13.2 12.2L9.5 8.5Z" fill="#777"/><path d="M8.3 9.7L12.0 13.4L8.3 17.1L4.6000000000000005 13.4Z" fill="#777"/></svg>
<svg class="a" style="left:228px;top:787px;" width="24" height="17" viewBox="0 0 24 17"><path d="M1 1.5L10 4.5V11.5L1 14.5Z" fill="none" stroke="#777" stroke-width="1.3"/><path d="M11.5 4.5L21 1V15.5L11.5 11.5Z" fill="#777"/></svg>
<svg class="a" style="left:285px;top:787px;" width="18" height="17" viewBox="0 0 18 17"><path d="M1 8.5L16 1.5V15.5Z" fill="#777"/></svg>
<svg class="a" style="left:578px;top:789px;" width="33" height="14" viewBox="0 0 33 14"><rect x="0.5" y="0.8" width="9" height="12.2" fill="#777"/><rect x="10.7" y="0.8" width="8.5" height="12.2" fill="#777"/><rect x="22.2" y="1.3" width="8.4" height="11.4" fill="none" stroke="#777" stroke-width="1"/></svg>
<svg class="a" style="left:638px;top:786px;" width="27" height="21" viewBox="0 0 27 21"><path d="M12 3.5H8A6 6 0 0 0 8 15.5H9M15 15.5H18A6 6 0 0 0 18 3.5H17" fill="none" stroke="#777" stroke-width="1.3"/><path d="M13 0L18.5 3.5L13 7Z" fill="#777"/><path d="M14 12L8.5 15.5L14 19Z" fill="#777"/></svg>
<svg class="a" style="left:695px;top:786px;" width="24" height="19" viewBox="0 0 24 19"><rect x="1" y="1" width="1.2" height="17" fill="#777"/><rect x="21" y="1" width="1.2" height="17" fill="#777"/><path d="M5 3.5L19 9.5L5 15.5Z" fill="#777"/></svg>
<div class="a" style="left:355px;top:792px;width:182px;height:1px;background:#b0b0b0;"></div>
<div class="a" style="left:355px;top:793px;width:182px;height:1px;background:#000;"></div>
<svg class="a" style="left:433px;top:780px;" width="26" height="26" viewBox="0 0 26 26"><defs><linearGradient id="kn" x1="1" y1="0" x2="0" y2="1"><stop offset="0" stop-color="#8a1418"/><stop offset="1" stop-color="#2e0406"/></linearGradient></defs><circle cx="13" cy="13" r="11" fill="none" stroke="#6c6c6c" stroke-width="2.8" stroke-opacity=".85"/><circle cx="13" cy="13" r="8.4" fill="#111"/><circle cx="13" cy="13" r="7.4" fill="url(#kn)"/></svg>
<svg class="a" style="left:995px;top:759px;" width="62" height="62" viewBox="0 0 62 62"><defs><clipPath id="cc"><circle cx="30.5" cy="29.8" r="27.7"/></clipPath></defs>
<g clip-path="url(#cc)" opacity=".94">
<rect x="0" y="0" width="62" height="62" fill="#13699f"/>
<path d="M0 33C15 42 40 42 60 14V62H0Z" fill="#c6c6c6"/>
<path d="M0 43C20 53 44 51 62 17V62H0Z" fill="#c97a1f"/>
<path d="M12 29.7L25.8 19.2V61H15.9V29.7Z" fill="#c6c6c6"/>
<path d="M33.6 18.9L44.5 11.1V61H35.5V18.9Z" fill="#c6c6c6"/>
<path d="M44.5 14.5Q54 14.5 59 21V25L44.5 31Z" fill="#c6c6c6"/>
<path d="M45 16.5Q52 17.5 55 19L45 30Z" fill="#13699f"/>
<path d="M15 18Q5 25 4 37" fill="none" stroke="#e4e4e4" stroke-width="1.5"/>
<path d="M20 11.5L20.9 13.8L23.3 13.8L21.4 15.3L22.1 17.6L20 16.2L17.9 17.6L18.6 15.3L16.7 13.8L19.1 13.8Z" fill="#d4d4d4"/>
</g></svg>
<svg class="a" style="left:1054px;top:763px;" width="144" height="34" viewBox="0 0 144 34"><g fill="none" stroke="#1a76c4" stroke-linecap="butt" opacity=".9"><path d="M4.0 4.5L8.5 8.0" stroke-width="4.32"/><path d="M3.0 10.5L7.0 14.0" stroke-width="4.32"/><path d="M5.5 28.5L10.5 18.5" stroke-width="4.59"/><path d="M11.0 6.2L29.5 6.2" stroke-width="3.24"/><path d="M26.5 4.0L26.5 29.0" stroke-width="4.86"/><path d="M27.0 27.5L21.0 24.5" stroke-width="4.05"/><rect x="12.5" y="11.5" width="7" height="11" fill="none" stroke-width="3.51"/><path d="M31.0 9.0L56.5 9.0" stroke-width="3.51"/><path d="M42.5 3.5L34.0 17.5" stroke-width="4.59"/><path d="M34.0 17.5L54.5 17.5" stroke-width="3.51"/><path d="M44.3 9.0L44.3 29.5" stroke-width="4.86"/><path d="M37.0 21.0L31.5 27.5" stroke-width="4.59"/><path d="M48.3 20.5L55.5 26.5" stroke-width="4.86"/><path d="M58.3 8.2L70.0 8.2" stroke-width="3.24"/><path d="M63.7 3.4L59.3 15.5" stroke-width="4.32"/><path d="M59.3 14.6L71.0 14.6" stroke-width="3.24"/><path d="M64.8 8.0L64.8 29.5" stroke-width="4.59"/><path d="M58.0 22.0L71.0 19.5" stroke-width="3.51"/><path d="M75.0 4.0L71.0 13.5" stroke-width="4.32"/><path d="M73.0 10.6L84.5 10.6" stroke-width="3.24"/><path d="M84.0 10.5L82.0 14.0" stroke-width="3.51"/><path d="M74.8 12.6L67.0 27.5" stroke-width="4.86"/><path d="M75.7 18.4L83.0 26.5" stroke-width="4.86"/><path d="M92.6 3.9L85.4 18.4" stroke-width="4.59"/><path d="M91.3 12.0L91.3 29.5" stroke-width="4.59"/><path d="M97.5 7.0L94.0 13.5" stroke-width="4.05"/><path d="M95.0 11.0L109.5 11.0" stroke-width="3.24"/><path d="M92.0 17.9L112.0 17.9" stroke-width="3.51"/><path d="M101.8 3.0L101.8 29.5" stroke-width="4.86"/><path d="M116.6 4.0L116.6 29.5" stroke-width="5.40"/><path d="M135.3 3.5L135.3 29.5" stroke-width="5.67"/><path d="M116.6 6.0L135.3 6.0" stroke-width="3.24"/><path d="M120.0 9.5L131.0 9.5" stroke-width="2.97"/><path d="M119.0 13.5L132.0 13.5" stroke-width="3.24"/><path d="M125.2 15.4L119.5 22.5" stroke-width="4.05"/><path d="M129.0 14.0L129.0 22.0" stroke-width="3.78"/><path d="M118.0 25.0L133.0 25.0" stroke-width="3.24"/></g></svg>
<div class="a t " style="left:1058.5px;top:799px;font-size:18.5px;color:#2a8a22;font-family:'Liberation Serif',serif;font-weight:bold;letter-spacing:0.8px;opacity:.92;-webkit-text-stroke:0.6px #2a8a22">www.pc0359.cn</div>
</body></html>
